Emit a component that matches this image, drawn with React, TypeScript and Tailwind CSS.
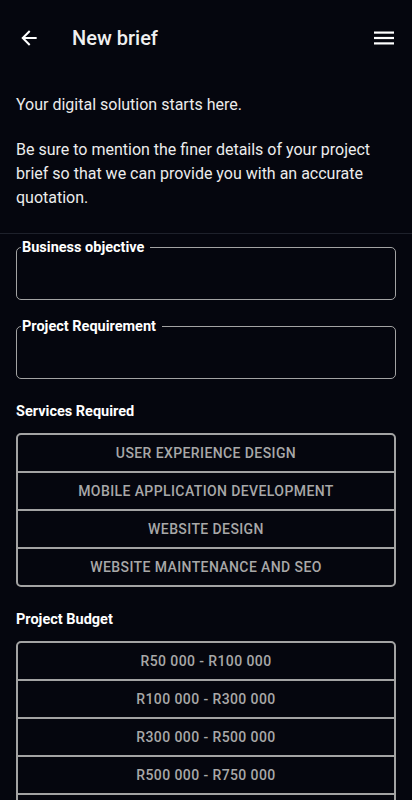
import React from "react";

const services = [
  "USER EXPERIENCE DESIGN",
  "MOBILE APPLICATION DEVELOPMENT",
  "WEBSITE DESIGN",
  "WEBSITE MAINTENANCE AND SEO",
];

const budgets = [
  "R50 000 - R100 000",
  "R100 000 - R300 000",
  "R300 000 - R500 000",
  "R500 000 - R750 000",
  "R750 000 - R1 000 000",
];

function Field({ label }: { label: string }) {
  return (
    <fieldset className="mx-4 h-[61px] rounded-[5px] border-[1.5px] border-[#a3a3a3] pl-[4px]">
      <legend className="pr-[6px] pl-[1px] text-[14.5px] font-bold leading-[17px] text-white">
        {label}
      </legend>
    </fieldset>
  );
}

function OptionList({ items }: { items: string[] }) {
  return (
    <div className="mx-4 overflow-hidden rounded-[5px] border-2 border-[#a3a3a3]">
      {items.map((item, i) => (
        <div
          key={item}
          className={`flex h-[36px] box-content items-center justify-center text-[14px] font-medium tracking-[0.4px] text-[#a8a8a8] ${
            i > 0 ? "border-t-2 border-[#a3a3a3]" : ""
          }`}
        >
          {item}
        </div>
      ))}
    </div>
  );
}

export default function App() {
  return (
    <div className="min-h-[800px] bg-[#05060e] font-['Roboto',sans-serif] text-[#eeeeee]">
      {/* top bar */}
      <div className="flex h-[76px] items-center px-[19px]">
        <svg width="20" height="20" viewBox="0 0 24 24" fill="none" stroke="white" strokeWidth="2.4" strokeLinecap="square">
          <path d="M20 12H5M12 4.5L4.5 12 12 19.5" />
        </svg>
        <h1 className="ml-[33px] text-[20px] font-medium text-[#f0f0f0]">New brief</h1>
        <svg className="ml-auto mr-[-1px]" width="20" height="16" viewBox="0 0 20 16" fill="white">
          <rect x="0" y="1.5" width="20" height="2.2" />
          <rect x="0" y="6.9" width="20" height="2.2" />
          <rect x="0" y="12.3" width="20" height="2.2" />
        </svg>
      </div>

      {/* intro */}
      <div className="border-b border-[#1e212b] px-4 pt-[17px] pb-[23px] text-[16px] leading-[24px] text-[#ececec]">
        <p>Your digital solution starts here.</p>
        <p className="mt-[21px]">
          Be sure to mention the finer details of your project brief so that we can provide you with an accurate quotation.
        </p>
      </div>

      <div className="flex flex-col pt-[5px]">
        <Field label="Business objective" />
        <div className="h-[18px]" />
        <Field label="Project Requirement" />

        <h2 className="mx-4 mt-[24px] text-[14.5px] leading-[17px] font-bold text-white">Services Required</h2>
        <div className="mt-[13px]">
          <OptionList items={services} />
        </div>

        <h2 className="mx-4 mt-[24px] text-[14.5px] leading-[17px] font-bold text-white">Project Budget</h2>
        <div className="mt-[13px]">
          <OptionList items={budgets} />
        </div>
      </div>
    </div>
  );
}
